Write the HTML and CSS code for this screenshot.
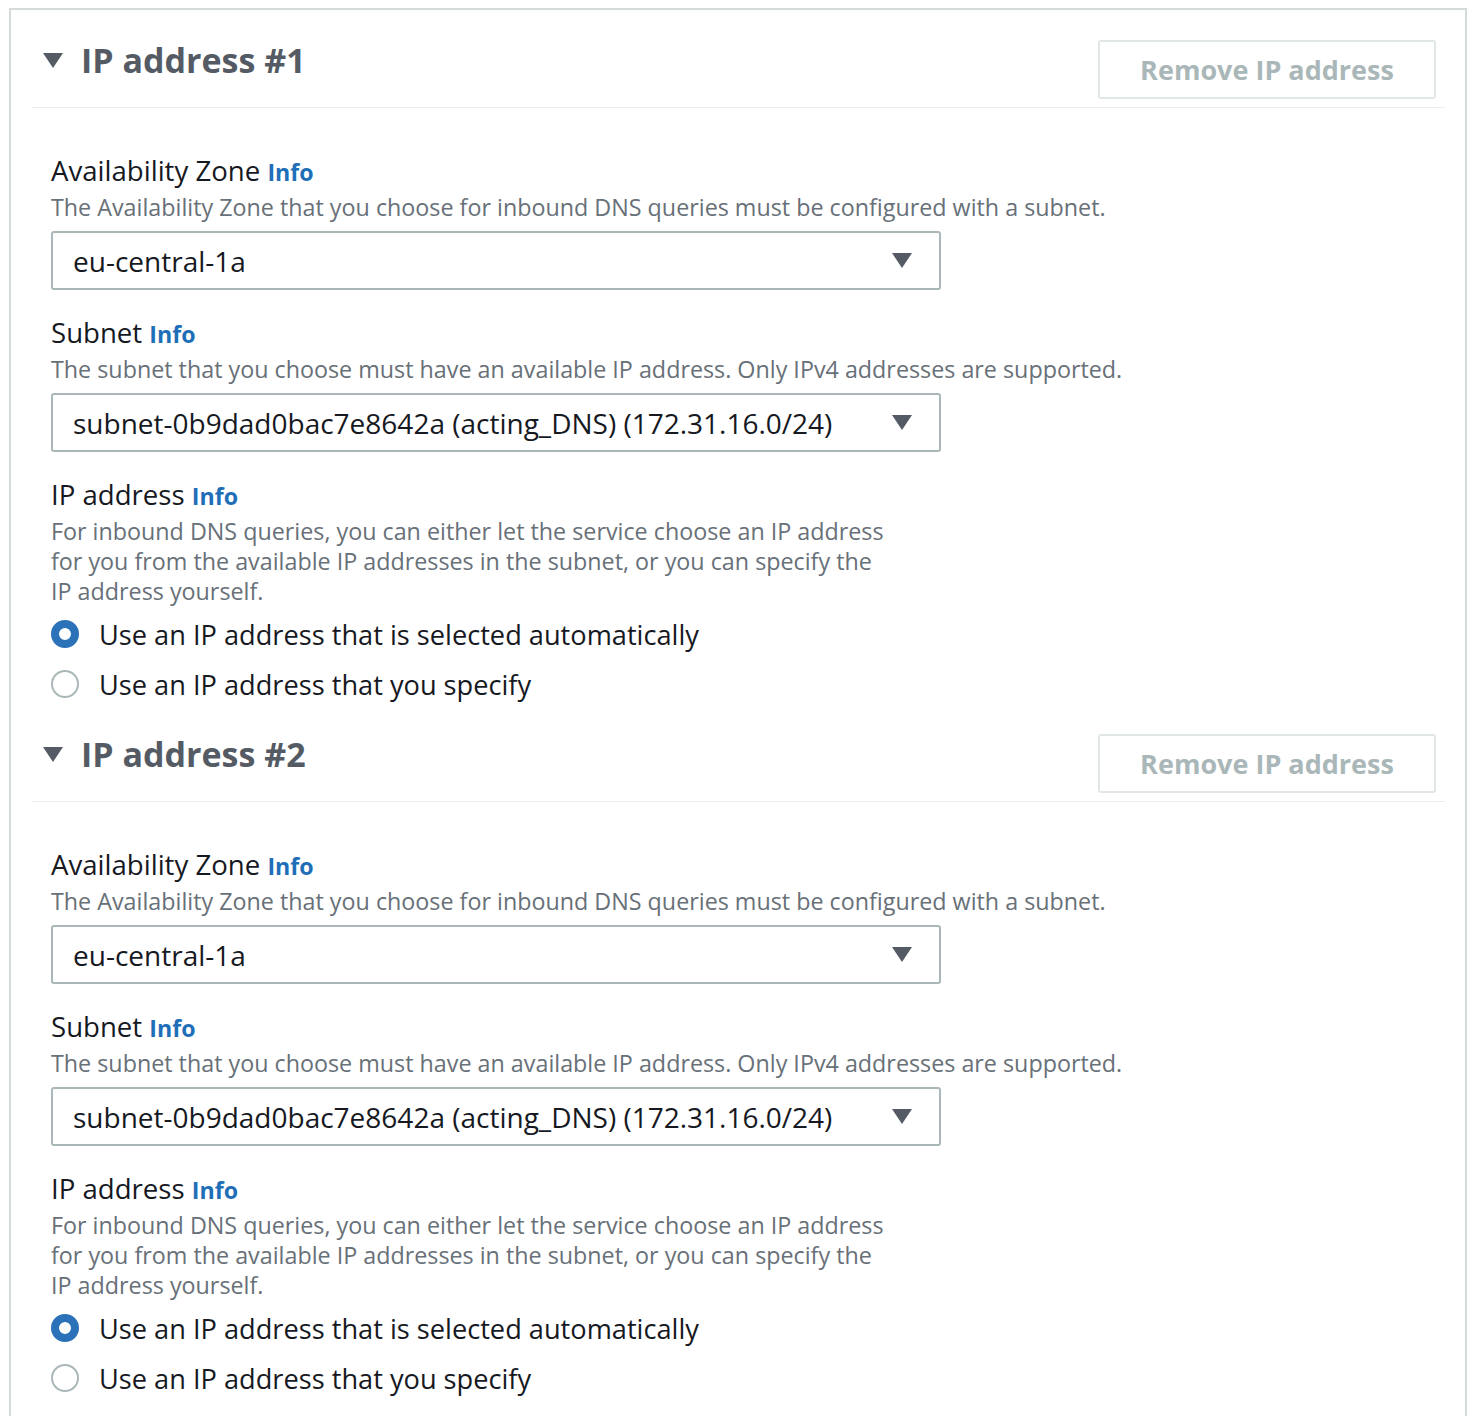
FILE: index.html
```html
<!doctype html>
<html>
<head>
<meta charset="utf-8">
<title>Inbound endpoint IP addresses</title>
<link rel="stylesheet" href="styles.css">
</head>
<body>

<div class="container">

  <div class="section">
    <div class="section-header">
      <h2 class="section-title"><span class="caret-down"></span>IP address #1</h2>
      <button class="btn-remove" disabled>Remove IP address</button>
    </div>
    <div class="section-body">
      <div class="field">
        <div class="field-label">Availability Zone <a class="info" href="#">Info</a></div>
        <div class="field-desc">The Availability Zone that you choose for inbound DNS queries must be configured with a subnet.</div>
        <div class="select">
          <span>eu-central-1a</span>
          <span class="select-caret"></span>
        </div>
      </div>
      <div class="field">
        <div class="field-label">Subnet <a class="info" href="#">Info</a></div>
        <div class="field-desc">The subnet that you choose must have an available IP address. Only IPv4 addresses are supported.</div>
        <div class="select">
          <span>subnet-0b9dad0bac7e8642a (acting_DNS) (172.31.16.0/24)</span>
          <span class="select-caret"></span>
        </div>
      </div>
      <div class="field">
        <div class="field-label">IP address <a class="info" href="#">Info</a></div>
        <div class="field-desc narrow">For inbound DNS queries, you can either let the service choose an IP address for you from the available IP addresses in the subnet, or you can specify the IP address yourself.</div>
        <div class="radio-group">
          <label class="radio"><span class="radio-circle checked"></span>Use an IP address that is selected automatically</label>
          <label class="radio"><span class="radio-circle"></span>Use an IP address that you specify</label>
        </div>
      </div>
    </div>
  </div>

  <div class="section">
    <div class="section-header">
      <h2 class="section-title"><span class="caret-down"></span>IP address #2</h2>
      <button class="btn-remove" disabled>Remove IP address</button>
    </div>
    <div class="section-body">
      <div class="field">
        <div class="field-label">Availability Zone <a class="info" href="#">Info</a></div>
        <div class="field-desc">The Availability Zone that you choose for inbound DNS queries must be configured with a subnet.</div>
        <div class="select">
          <span>eu-central-1a</span>
          <span class="select-caret"></span>
        </div>
      </div>
      <div class="field">
        <div class="field-label">Subnet <a class="info" href="#">Info</a></div>
        <div class="field-desc">The subnet that you choose must have an available IP address. Only IPv4 addresses are supported.</div>
        <div class="select">
          <span>subnet-0b9dad0bac7e8642a (acting_DNS) (172.31.16.0/24)</span>
          <span class="select-caret"></span>
        </div>
      </div>
      <div class="field">
        <div class="field-label">IP address <a class="info" href="#">Info</a></div>
        <div class="field-desc narrow">For inbound DNS queries, you can either let the service choose an IP address for you from the available IP addresses in the subnet, or you can specify the IP address yourself.</div>
        <div class="radio-group">
          <label class="radio"><span class="radio-circle checked"></span>Use an IP address that is selected automatically</label>
          <label class="radio"><span class="radio-circle"></span>Use an IP address that you specify</label>
        </div>
      </div>
    </div>
  </div>

</div>

</body>
</html>
```
FILE: styles.css
```css
body {
  margin: 0;
  font-family: "Open Sans", "Liberation Sans", sans-serif;
  color: #16191f;
  background: #fff;
}

.container {
  margin: 8px 5px 0 9px;
  border: 2px solid #d5dbdb;
  border-bottom: none;
  padding: 5px 0 60px;
}

.section {
  margin: 0 20px 0 21px;
}

.section-header {
  display: flex;
  justify-content: space-between;
  align-items: flex-start;
  padding: 25px 9px 8px 11px;
  border-bottom: 1px solid #eaeded;
}

.section-title {
  display: flex;
  align-items: center;
  margin: 0;
  font-size: 34px;
  line-height: 40px;
  font-weight: bold;
  color: #545b64;
}

.caret-down {
  width: 0;
  height: 0;
  border-left: 10px solid transparent;
  border-right: 10px solid transparent;
  border-top: 15px solid #545b64;
  margin-right: 18px;
}

.btn-remove {
  width: 338px;
  height: 59px;
  padding: 0;
  background: #fff;
  border: 2px solid #e1e6e6;
  border-radius: 3px;
  font-family: inherit;
  font-size: 27px;
  font-weight: bold;
  color: #aab7b8;
}

.section-body {
  padding: 44px 19px 0;
}

.field + .field {
  margin-top: 24px;
}

.field-label {
  height: 36px;
  font-size: 27.6px;
  line-height: 36px;
}

.info {
  font-size: 23.2px;
  line-height: 1;
  font-weight: bold;
  color: #1f6fb8;
  text-decoration: none;
}

.field-desc {
  margin-top: 4px;
  font-size: 23.3px;
  line-height: 30px;
  color: #687078;
}

.field-desc.narrow {
  max-width: 840px;
}

.select {
  display: flex;
  justify-content: space-between;
  align-items: center;
  box-sizing: border-box;
  width: 890px;
  height: 59px;
  margin-top: 9px;
  padding: 0 27px 0 20px;
  border: 2px solid #aab7b8;
  border-radius: 3px;
  font-size: 28px;
}

.select-caret {
  width: 0;
  height: 0;
  border-left: 10px solid transparent;
  border-right: 10px solid transparent;
  border-top: 15px solid #545b64;
}

.radio-group {
  margin-top: 3px;
}

.radio {
  display: flex;
  align-items: center;
  height: 50px;
  font-size: 27.2px;
}

.radio-circle {
  box-sizing: border-box;
  width: 28px;
  height: 28px;
  margin-right: 20px;
  border: 2px solid #aab7b8;
  border-radius: 50%;
  background: #fff;
}

.radio-circle.checked {
  border: 8px solid #2b72b8;
}
```
